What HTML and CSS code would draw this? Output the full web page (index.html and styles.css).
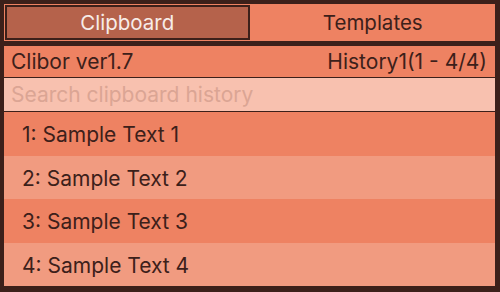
FILE: index.html
```html
<!DOCTYPE html>
<html lang="en">
<head>
    <meta charset="UTF-8">
    <title>Clibor</title>
    <link rel="stylesheet" href="styles.css">
</head>
<body>
    <div class="window">
        <div class="tabs">
            <div class="tab active"><span class="tab-inner">Clipboard</span></div>
            <div class="tab"><span class="tab-inner">Templates</span></div>
        </div>

        <div class="panel">
            <div class="info-bar">
                <span>Clibor ver1.7</span>
                <span>History1(1 - 4/4)</span>
            </div>
            <input class="search" type="text" placeholder="Search clipboard history">
            <ul class="history">
                <li class="item">1: Sample Text 1</li>
                <li class="item alt">2: Sample Text 2</li>
                <li class="item">3: Sample Text 3</li>
                <li class="item alt">4: Sample Text 4</li>
            </ul>
        </div>
    </div>
</body>
</html>
```

FILE: styles.css
```css
html, body {
    margin: 0;
    height: 100%;
    background: #3c201a;
}
body {
    font-family: 'Inter', 'Roboto', sans-serif;
    color: #3c201a;
}
.window {
    display: flex;
    flex-direction: column;
    gap: 5px;
    padding: 4px 5px 6px 4px;
    height: 292px;
    box-sizing: border-box;
}
.tabs {
    display: flex;
    height: 37px;
}
.tab {
    flex: 1;
    display: flex;
    background: #ee8262;
    font-size: 20.5px;
}
.tab-inner {
    flex: 1;
    display: flex;
    align-items: center;
    justify-content: center;
}
.tab.active {
    padding: 1px;
}
.tab.active .tab-inner {
    background: #b5624b;
    border: 2px solid #3c201a;
    color: #f7ece8;
}
.panel {
    flex: 1;
    display: flex;
    flex-direction: column;
    gap: 1px;
}
.info-bar {
    height: 31px;
    display: flex;
    align-items: center;
    justify-content: space-between;
    padding: 0 8px 0 7px;
    background: #ee8262;
    font-size: 21px;
}
.search {
    height: 33px;
    margin: 0;
    border: none;
    outline: none;
    padding: 0 7px;
    background: #f8c1af;
    font-family: inherit;
    font-size: 21px;
    color: #3c201a;
}
.search::placeholder {
    color: #dba594;
}
.history {
    flex: 1;
    list-style: none;
    margin: 0;
    padding: 0;
    display: flex;
    flex-direction: column;
}
.item {
    flex: 1;
    display: flex;
    align-items: center;
    padding: 2px 0 0 18px;
    background: #ee8262;
    font-size: 21px;
}
.item.alt {
    background: #f19b80;
}
```
